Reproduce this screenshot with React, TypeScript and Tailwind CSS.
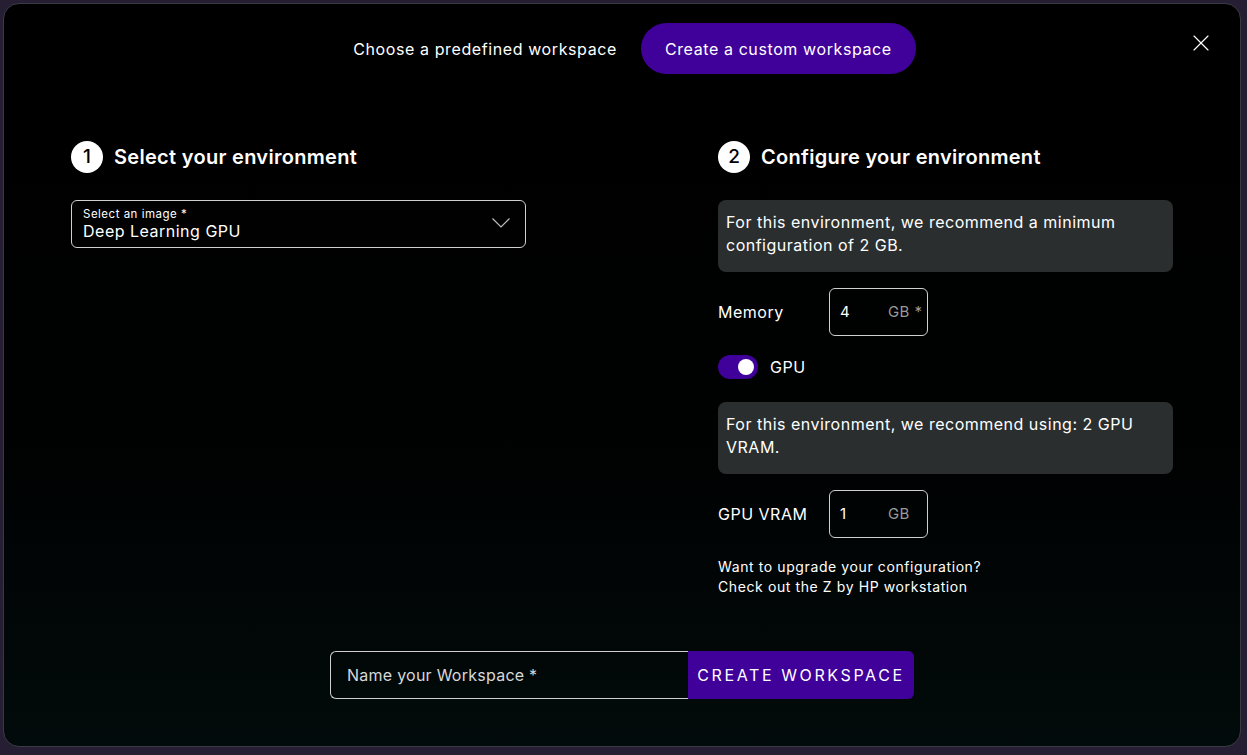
import { X } from "lucide-react";

const font = { fontFamily: '"Inter", "Liberation Sans", sans-serif' };

function StepTitle({ n, title }: { n: number; title: string }) {
    return (
        <div className="flex h-8 items-center gap-[11px]">
            <div className="flex h-8 w-8 items-center justify-center rounded-full bg-white text-[19px] font-medium text-black">
                {n}
            </div>
            <h2 className="text-[20px] font-semibold tracking-[0.3px] text-white">{title}</h2>
        </div>
    );
}

function NumberField({ label, value, unit }: { label: string; value: string; unit: string }) {
    return (
        <div className="flex items-center">
            <span className="w-[111px] text-[16px] tracking-[0.5px] text-white">{label}</span>
            <div className="flex h-12 w-[99px] items-center rounded-md border border-[#d0d0d0] pl-[10px]">
                <span className="w-[48px] text-[15px] text-white">{value}</span>
                <span className="text-[15px] tracking-[0.4px] text-[#9a9a9a]">{unit}</span>
            </div>
        </div>
    );
}

function Note({ children }: { children: React.ReactNode }) {
    return (
        <div className="h-[72px] rounded-lg bg-[#2a2e2f] px-2 pt-[11px] text-[16px] leading-[23px] tracking-[0.5px] text-white">
            {children}
        </div>
    );
}

export default function App() {
    return (
        <div className="h-[755px] w-[1247px] bg-[#261f33] p-[3px] pr-[6px] pb-[8px]" style={font}>
            <div className="flex h-full flex-col rounded-[16px] border border-[#3a3a44] bg-gradient-to-b from-[#000000] to-[#020b0b]">
                <div className="relative flex items-center justify-center pt-[19px] pl-[25px]">
                    <div className="flex items-center gap-6">
                        <span className="text-[16px] tracking-[0.6px] text-white">Choose a predefined workspace</span>
                        <button className="h-[51px] rounded-full bg-[#40009a] px-6 text-[16px] tracking-[0.6px] text-white">
                            Create a custom workspace
                        </button>
                    </div>
                    <X className="absolute right-[25px] top-[25px] h-7 w-7 text-white" strokeWidth={1} />
                </div>

                <div className="mt-[67px] grid grid-cols-2 gap-[192px] pl-[67px] pr-[67px]">
                    <div className="flex flex-col">
                        <StepTitle n={1} title="Select your environment" />
                        <div className="mt-[27px] flex h-12 w-[455px] items-center justify-between rounded-md border border-[#cfcfcf] pl-[11px] pr-[14px]">
                            <div className="flex flex-col">
                                <span className="text-[11.5px] leading-[14px] tracking-[0.5px] text-white">Select an image *</span>
                                <span className="text-[16px] leading-[20px] tracking-[0.5px] text-white">Deep Learning GPU</span>
                            </div>
                            <svg width="20" height="12" viewBox="0 0 20 12" fill="none" className="-mt-[3px]">
                                <polyline points="1.5,1.5 10,10 18.5,1.5" stroke="#bdbdbd" strokeWidth="1.2" />
                            </svg>
                        </div>
                    </div>

                    <div className="flex w-[455px] flex-col">
                        <StepTitle n={2} title="Configure your environment" />
                        <div className="mt-[27px]">
                            <Note>
                                For this environment, we recommend a minimum
                                <br />
                                configuration of 2 GB.
                            </Note>
                        </div>
                        <div className="mt-4">
                            <NumberField label="Memory" value="4" unit="GB *" />
                        </div>
                        <div className="mt-[19px] flex items-center gap-3">
                            <div className="flex h-6 w-10 items-center justify-end rounded-full bg-[#40009a] pr-[4px]">
                                <div className="h-[16px] w-[16px] rounded-full bg-white" />
                            </div>
                            <span className="text-[16px] tracking-[0.5px] text-white">GPU</span>
                        </div>
                        <div className="mt-[23px]">
                            <Note>
                                For this environment, we recommend using: 2 GPU
                                <br />
                                VRAM.
                            </Note>
                        </div>
                        <div className="mt-4">
                            <NumberField label="GPU VRAM" value="1" unit="GB" />
                        </div>
                        <p className="mt-[19px] text-[14px] leading-[20px] tracking-[0.6px] text-white">
                            Want to upgrade your configuration?
                            <br />
                            Check out the Z by HP workstation
                        </p>
                    </div>
                </div>

                <div className="mt-[54px] flex justify-center">
                    <div className="flex h-12 w-[358px] items-center rounded-l-md border border-r-0 border-[#cfcfcf] px-4">
                        <span className="text-[16px] tracking-[0.25px] text-[#d8d8d8]">Name your Workspace *</span>
                    </div>
                    <button className="h-12 w-[226px] rounded-r-md bg-[#40009a] text-[16px] tracking-[2.6px] text-white">
                        CREATE WORKSPACE
                    </button>
                </div>
            </div>
        </div>
    );
}
